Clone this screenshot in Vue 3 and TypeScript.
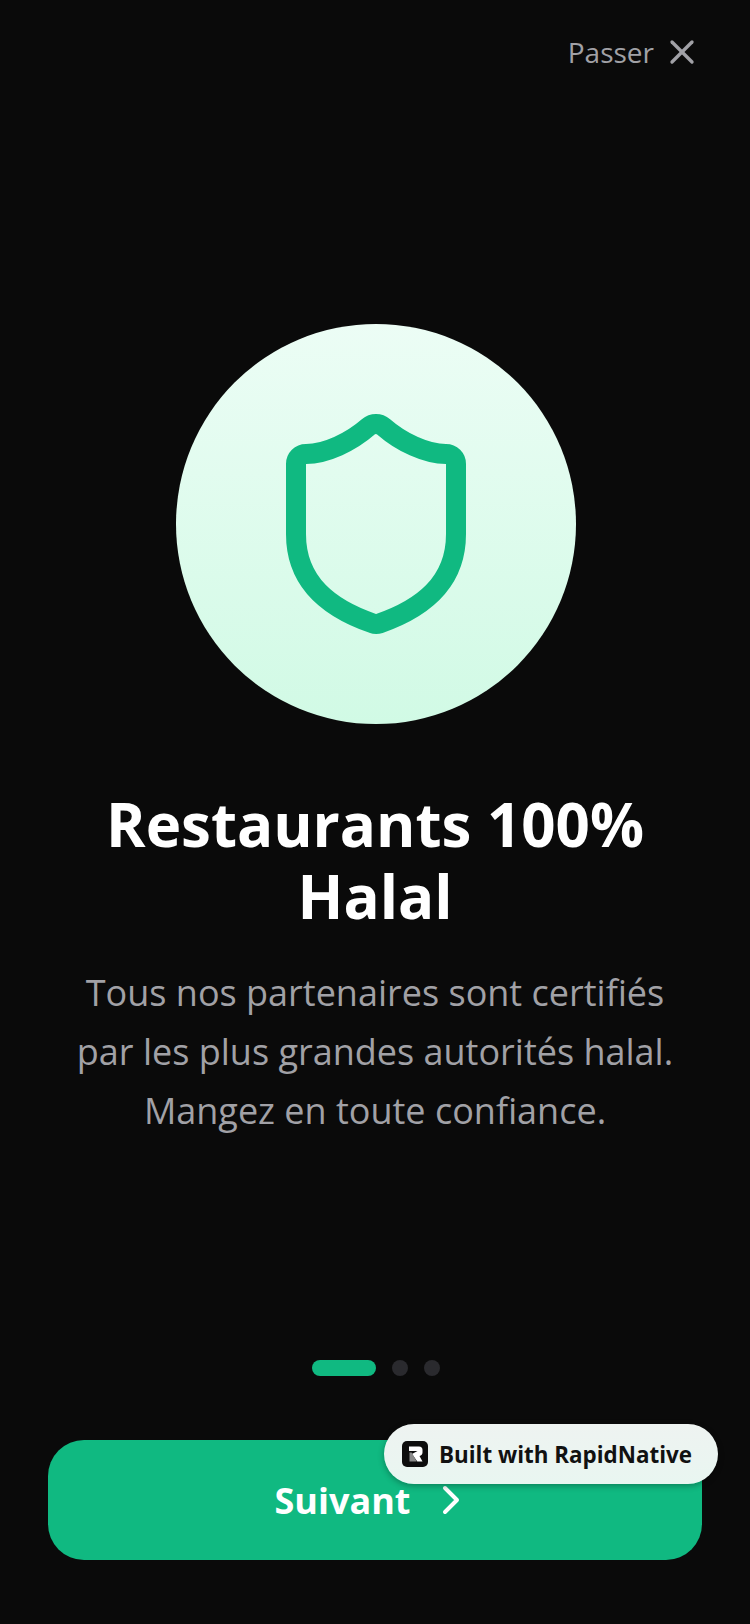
<script setup lang="ts">
const descLines = [
  "Tous nos partenaires sont certifiés",
  "par les plus grandes autorités halal.",
  "Mangez en toute confiance.",
];
const dots = [true, false, false];
</script>

<template>
  <div class="screen">
    <div class="top-bar">
      <span class="skip">Passer</span>
      <svg class="close" width="40" height="40" viewBox="0 0 24 24" fill="none" stroke="currentColor" stroke-width="2" stroke-linecap="round" stroke-linejoin="round">
        <path d="M18 6 6 18" />
        <path d="m6 6 12 12" />
      </svg>
    </div>

    <div class="hero">
      <svg width="240" height="240" viewBox="0 0 24 24" fill="none" stroke="#10b981" stroke-width="2" stroke-linecap="round" stroke-linejoin="round">
        <path d="M20 13c0 5-3.5 7.5-7.66 8.95a1 1 0 0 1-.67-.01C7.5 20.5 4 18 4 13V6a1 1 0 0 1 1-1c2 0 4.5-1.2 6.24-2.72a1.17 1.17 0 0 1 1.52 0C14.51 3.81 17 5 19 5a1 1 0 0 1 1 1z" />
      </svg>
    </div>

    <h1 class="title">Restaurants 100%<br />Halal</h1>
    <p class="desc">
      <span v-for="line in descLines" :key="line" class="desc-line">{{ line }}</span>
    </p>

    <div class="pager">
      <span v-for="(active, i) in dots" :key="i" class="dot" :class="{ active }" />
    </div>

    <div class="footer">
      <button class="next" type="button">
        <span>Suivant</span>
        <svg width="48" height="48" viewBox="0 0 24 24" fill="none" stroke="currentColor" stroke-width="2" stroke-linecap="round" stroke-linejoin="round">
          <path d="m9 18 6-6-6-6" />
        </svg>
      </button>
      <div class="badge">
        <svg class="badge-logo" width="26" height="26" viewBox="0 0 26 26">
          <rect width="26" height="26" rx="5" fill="#0d0d0d" />
          <path d="M7 5.5h10a3.5 3.5 0 0 1 3.5 3.5v2.5a3.5 3.5 0 0 1-3 3.4l3 5.6h-5.2L10 13l5.5-3H7z" fill="#fff" />
          <path d="M7.5 11.5h2.2l5 9H7.5z" fill="#8a8a8a" />
        </svg>
        <span>Built with RapidNative</span>
      </div>
    </div>
  </div>
</template>

<style scoped>
.screen {
  width: 750px;
  height: 1624px;
  background: #0a0a0a;
  display: flex;
  flex-direction: column;
  align-items: center;
  font-family: "Open Sans", sans-serif;
  color: #fff;
  overflow: hidden;
}

.top-bar {
  width: 100%;
  box-sizing: border-box;
  display: flex;
  justify-content: flex-end;
  align-items: center;
  gap: 8px;
  padding: 32px 48px 0;
  height: 72px;
  color: #a1a1a6;
}

.skip {
  font-size: 28px;
  line-height: 40px;
}

.close {
  display: block;
}

.hero {
  width: 400px;
  height: 400px;
  margin-top: 252px;
  margin-left: 2px;
  border-radius: 50%;
  background: linear-gradient(180deg, #ecfdf5 0%, #d1fae5 100%);
  display: flex;
  align-items: center;
  justify-content: center;
}

.title {
  margin: 64px 0 0;
  font-size: 60px;
  line-height: 72px;
  font-weight: 700;
  text-align: center;
}

.desc {
  margin: 31px 0 0;
  font-size: 36px;
  line-height: 59px;
  color: #a1a1a6;
  text-align: center;
}

.desc-line {
  display: block;
}

.pager {
  display: flex;
  align-items: center;
  gap: 16px;
  margin-top: 220px;
  margin-left: 2px;
}

.dot {
  width: 16px;
  height: 16px;
  border-radius: 8px;
  background: #2a2a2e;
}

.dot.active {
  width: 64px;
  background: #10b981;
}

.footer {
  position: relative;
  width: 100%;
  box-sizing: border-box;
  padding: 0 48px;
  margin-top: 64px;
}

.next {
  width: 100%;
  height: 120px;
  border: none;
  border-radius: 36px;
  background: #10b981;
  color: #fff;
  font-family: inherit;
  font-size: 36px;
  font-weight: 700;
  display: flex;
  align-items: center;
  justify-content: center;
  gap: 17px;
}

.badge {
  position: absolute;
  left: 384px;
  top: -16px;
  width: 334px;
  height: 60px;
  box-sizing: border-box;
  padding: 0 18px;
  border-radius: 30px;
  display: flex;
  align-items: center;
  gap: 11px;
  background: linear-gradient(180deg, #eef3f1 0%, #e9f6f1 100%);
  box-shadow: 0 2px 6px rgba(0, 0, 0, 0.3);
  color: #111;
  font-size: 22.4px;
  font-weight: 700;
}

.badge-logo {
  flex: none;
}
</style>

<style>
body {
  background: #0a0a0a;
}
</style>
